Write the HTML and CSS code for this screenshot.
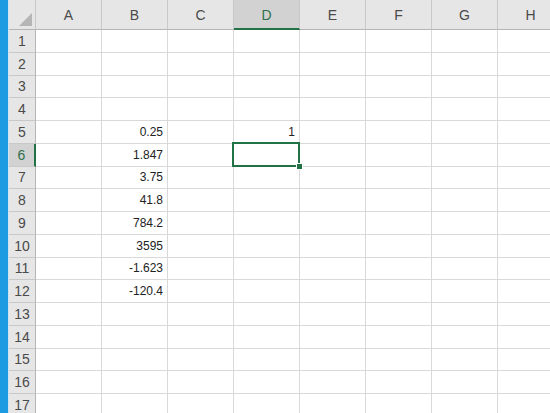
FILE: index.html
```html
<!DOCTYPE html>
<html>
<head>
<meta charset="utf-8">
<link rel="stylesheet" href="styles.css">
</head>
<body>
<div class="app">
  <div class="strip"></div>
  <div class="sheet">
    <div class="corner"><span class="tri"></span></div>
    <div class="ch">A</div><div class="ch">B</div><div class="ch">C</div><div class="ch sel">D</div><div class="ch">E</div><div class="ch">F</div><div class="ch">G</div><div class="ch">H</div>

    <div class="rh">1</div><div class="c"></div><div class="c"></div><div class="c"></div><div class="c"></div><div class="c"></div><div class="c"></div><div class="c"></div><div class="c"></div>
    <div class="rh">2</div><div class="c"></div><div class="c"></div><div class="c"></div><div class="c"></div><div class="c"></div><div class="c"></div><div class="c"></div><div class="c"></div>
    <div class="rh">3</div><div class="c"></div><div class="c"></div><div class="c"></div><div class="c"></div><div class="c"></div><div class="c"></div><div class="c"></div><div class="c"></div>
    <div class="rh">4</div><div class="c"></div><div class="c"></div><div class="c"></div><div class="c"></div><div class="c"></div><div class="c"></div><div class="c"></div><div class="c"></div>
    <div class="rh">5</div><div class="c"></div><div class="c num">0.25</div><div class="c"></div><div class="c num">1</div><div class="c"></div><div class="c"></div><div class="c"></div><div class="c"></div>
    <div class="rh sel">6</div><div class="c"></div><div class="c num">1.847</div><div class="c"></div><div class="c active"><span class="box"></span><span class="handle"></span></div><div class="c"></div><div class="c"></div><div class="c"></div><div class="c"></div>
    <div class="rh">7</div><div class="c"></div><div class="c num">3.75</div><div class="c"></div><div class="c"></div><div class="c"></div><div class="c"></div><div class="c"></div><div class="c"></div>
    <div class="rh">8</div><div class="c"></div><div class="c num">41.8</div><div class="c"></div><div class="c"></div><div class="c"></div><div class="c"></div><div class="c"></div><div class="c"></div>
    <div class="rh">9</div><div class="c"></div><div class="c num">784.2</div><div class="c"></div><div class="c"></div><div class="c"></div><div class="c"></div><div class="c"></div><div class="c"></div>
    <div class="rh">10</div><div class="c"></div><div class="c num">3595</div><div class="c"></div><div class="c"></div><div class="c"></div><div class="c"></div><div class="c"></div><div class="c"></div>
    <div class="rh">11</div><div class="c"></div><div class="c num">-1.623</div><div class="c"></div><div class="c"></div><div class="c"></div><div class="c"></div><div class="c"></div><div class="c"></div>
    <div class="rh">12</div><div class="c"></div><div class="c num">-120.4</div><div class="c"></div><div class="c"></div><div class="c"></div><div class="c"></div><div class="c"></div><div class="c"></div>
    <div class="rh">13</div><div class="c"></div><div class="c"></div><div class="c"></div><div class="c"></div><div class="c"></div><div class="c"></div><div class="c"></div><div class="c"></div>
    <div class="rh">14</div><div class="c"></div><div class="c"></div><div class="c"></div><div class="c"></div><div class="c"></div><div class="c"></div><div class="c"></div><div class="c"></div>
    <div class="rh">15</div><div class="c"></div><div class="c"></div><div class="c"></div><div class="c"></div><div class="c"></div><div class="c"></div><div class="c"></div><div class="c"></div>
    <div class="rh">16</div><div class="c"></div><div class="c"></div><div class="c"></div><div class="c"></div><div class="c"></div><div class="c"></div><div class="c"></div><div class="c"></div>
    <div class="rh">17</div><div class="c"></div><div class="c"></div><div class="c"></div><div class="c"></div><div class="c"></div><div class="c"></div><div class="c"></div><div class="c"></div>
  </div>
</div>
</body>
</html>
```
FILE: styles.css
```css
html, body {
  margin: 0;
  padding: 0;
  background: #ffffff;
  overflow: hidden;
}
body {
  font-family: "Liberation Sans", Arial, sans-serif;
  width: 550px;
  height: 413px;
}
.app {
  display: flex;
  width: 550px;
  height: 413px;
  overflow: hidden;
}
.strip {
  flex: 0 0 8px;
  background: #1d9be2;
  border-right: 1px solid #cfe4f2;
}
.sheet {
  display: grid;
  grid-template-columns: 27px repeat(8, 66px);
  grid-template-rows: 30px repeat(17, 22.75px);
  flex: 0 0 auto;
}
.corner {
  background: #e6e6e6;
  border-right: 1px solid #c8c8c8;
  border-bottom: 1px solid #b4b4b4;
  position: relative;
}
.tri {
  position: absolute;
  right: 3px;
  bottom: 3px;
  width: 0;
  height: 0;
  border-left: 13px solid transparent;
  border-bottom: 13px solid #b5b5b5;
}
.ch {
  background: #e6e6e6;
  border-right: 1px solid #c8c8c8;
  border-bottom: 1px solid #b4b4b4;
  color: #4a4a4a;
  font-size: 14px;
  display: flex;
  align-items: center;
  justify-content: center;
  padding-top: 1px;
}
.ch.sel {
  background: #d2d2d2;
  border-bottom: 2px solid #217346;
  color: #2f6f4c;
}
.rh {
  background: #e6e6e6;
  border-right: 1px solid #b4b4b4;
  border-bottom: 1px solid #c8c8c8;
  color: #4a4a4a;
  font-size: 14px;
  display: flex;
  align-items: center;
  justify-content: center;
}
.rh.sel {
  background: #d2d2d2;
  border-right: 2px solid #217346;
  color: #2f6f4c;
}
.c {
  border-right: 1px solid #d9d9d9;
  border-bottom: 1px solid #d9d9d9;
  font-size: 12px;
  color: #222222;
  display: flex;
  align-items: center;
  justify-content: flex-end;
  padding-right: 4px;
}
.active {
  position: relative;
}
.box {
  position: absolute;
  left: -2px;
  top: -2px;
  right: -1px;
  bottom: -1px;
  border: 2px solid #217346;
}
.handle {
  position: absolute;
  right: -4px;
  bottom: -4px;
  width: 5px;
  height: 5px;
  background: #217346;
  border: 1px solid #ffffff;
}
```
